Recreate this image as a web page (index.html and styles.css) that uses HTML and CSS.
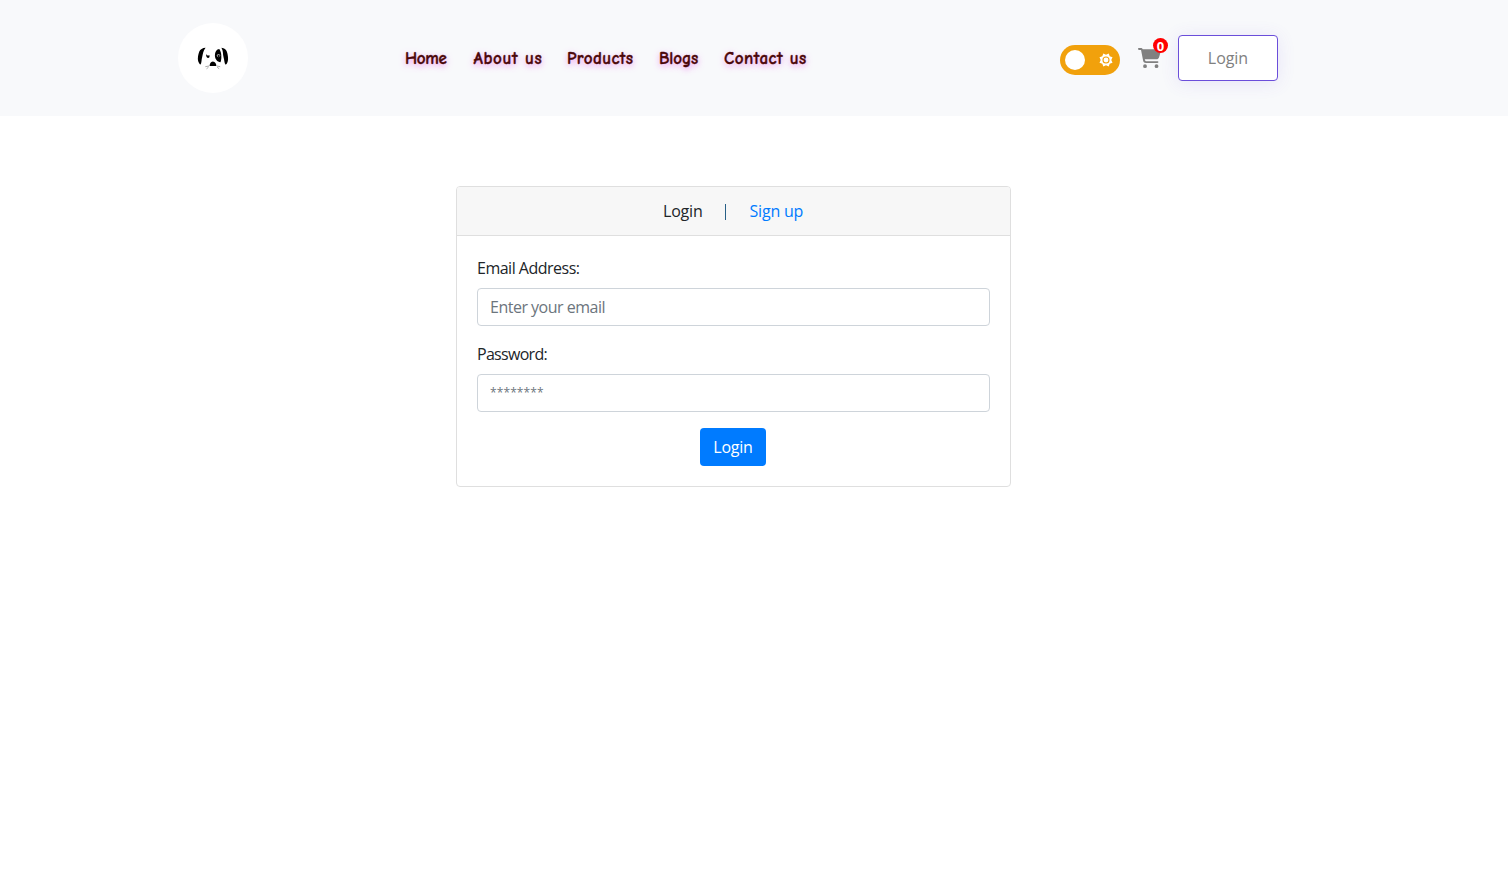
FILE: index.html
```html
<!DOCTYPE html>
<html lang="en">
<head>
<meta charset="utf-8">
<title>Login</title>
<link rel="stylesheet" href="styles.css">
</head>
<body>
<header class="header">
  <a class="logo" href="#" aria-label="Home page">
    <svg width="70" height="70" viewBox="0 0 70 70">
      <path d="M27.6 24.8C24.5 25 22.2 26.4 21.3 28.5C20.3 31 19.3 35.500 20.200 38.300C20.900 40.300 21.900 41.800 22.500 41.600C23.700 40.500 23.300 37 24.300 33.500C24.900 31 25.200 27.600 27.600 24.800Z"/>
      <path d="M43.4 24.800C46.300 25 48.200 26.600 48.900 28.700C49.800 31.500 50.600 36 49.700 38.600C49.100 40.500 48.200 42 47.500 41.600C46.200 40.200 46.600 37.500 45.500 34C44.700 31.200 45.300 27.500 43.400 24.800Z"/>
      <path d="M41.300 26C38.600 26.200 36.900 29 36.900 32.500C37 36 39 39 42.500 39.200C43.800 36 43.800 29.500 41.300 26Z"/>
      <circle class="logo-eye" cx="40.500" cy="32.600" r="1.700"/>
      <circle cx="40.700" cy="33" r=".9"/>
      <path d="M28 31.200L30 32.800L31.300 31.900Q32.200 35 29.800 34.900Q28.100 34.400 28 31.200Z"/>
      <path d="M34.800 38.400C37.200 38.400 38.300 40.600 38.300 42.900H31.600C31.600 40.800 32.600 38.400 34.800 38.400Z"/>
      <path class="logo-line" d="M31 43L27.300 43.700M30.500 44.200L28.500 45.800M38.800 43L42.200 43.700M39.200 44.200L41.200 45.800"/>
    </svg>
  </a>
  <nav class="nav">
    <a class="nav-home" href="#">Home</a>
    <a class="nav-about" href="#">About us</a>
    <a class="nav-products" href="#">Products</a>
    <a class="nav-blogs" href="#">Blogs</a>
    <a class="nav-contact" href="#">Contact us</a>
  </nav>
  <div class="actions">
    <button class="toggle" type="button" aria-label="Theme">
      <span class="knob"></span>
      <svg width="16" height="16" viewBox="-8 -8 16 16">
        <path class="sun" d="M0-5.300L2.700-6.500L3.700-3.700L6.500-2.700L5.300 0L6.500 2.700L3.700 3.700L2.700 6.500L0 5.300L-2.700 6.500L-3.700 3.700L-6.500 2.700L-5.300 0L-6.500-2.700L-3.700-3.700L-2.700-6.500Z"/>
        <circle class="sun-ring" r="3"/>
      </svg>
    </button>
    <a class="cart" href="#" aria-label="Cart">
      <svg width="23" height="20" viewBox="0 0 576 512" preserveAspectRatio="none">
        <path d="M0 24C0 10.700 10.700 0 24 0H69.500c22 0 41.500 12.800 50.600 32h411c26.300 0 45.500 25 38.600 50.400l-41 152.300c-8.500 31.400-37 53.300-69.500 53.300H170.700l5.400 28.500c2.200 11.300 12.100 19.500 23.600 19.500H488c13.300 0 24 10.700 24 24s-10.700 24-24 24H199.700c-34.600 0-64.300-24.600-70.700-58.500L77.400 54.500c-.7-3.800-4-6.500-7.900-6.500H24C10.700 48 0 37.300 0 24zM128 464a48 48 0 1 1 96 0a48 48 0 1 1-96 0zm336-48a48 48 0 1 1 0 96a48 48 0 1 1 0-96z"/>
      </svg>
      <span class="badge">0</span>
    </a>
    <a class="header-login" href="#">Login</a>
  </div>
</header>
<main class="card">
  <div class="tabs">
    <a class="tab active" href="#">Login</a>
    <span class="divider"></span>
    <a class="tab" href="#">Sign up</a>
  </div>
  <form class="form">
    <label class="label label-email" for="email">Email Address:</label>
    <input class="input" id="email" type="email" placeholder="Enter your email">
    <label class="label label-password" for="password">Password:</label>
    <input class="input input-password" id="password" type="password" placeholder="********">
    <button class="submit" type="button">Login</button>
  </form>
</main>
</body>
</html>
```
FILE: styles.css
```css
* { box-sizing: border-box; }
body {
  margin: 0;
  background: #fff;
  color: #212529;
  font: 16px/24px "Open Sans", "Noto Sans", sans-serif;
  letter-spacing: -.25px;
}
a { color: inherit; text-decoration: none; }
.header {
  display: flex;
  align-items: center;
  height: 116px;
  padding-left: 178px;
  background: #f8f9fb;
}
.logo {
  width: 70px;
  height: 70px;
  border-radius: 50%;
  background: #fff;
}
.logo svg { display: block; }
.logo-eye { fill: #999; }
.logo-line { fill: none; stroke: #888; stroke-width: .7; }
.nav {
  display: flex;
  width: 655px;
  padding: 1px 0 0 157px;
  color: #4b0709;
  font: 900 17px/24px "Comic Sans MS", "Comic Neue", Lato, sans-serif;
  text-shadow: 0 2px 6px rgba(236, 99, 233, .75);
  -webkit-text-stroke: .35px #4b0709;
  white-space: nowrap;
}
.nav-home { width: 68.5px; letter-spacing: -.35px; }
.nav-about { width: 93.5px; letter-spacing: .65px; }
.nav-products { width: 92px; letter-spacing: .4px; }
.nav-blogs { width: 65px; letter-spacing: -.1px; }
.nav-contact { letter-spacing: .5px; }
.actions { display: flex; align-items: center; padding-left: 157px; }
.toggle {
  display: flex;
  align-items: center;
  justify-content: space-between;
  width: 60px;
  height: 30px;
  margin-top: 4px;
  padding: 0 6px 0 5px;
  border: 0;
  border-radius: 15px;
  background: #f1a10c;
}
.knob { width: 20px; height: 20px; border-radius: 50%; background: #fff; }
.sun { fill: #fff; }
.sun-ring { fill: none; stroke: #f1a10c; stroke-width: 1.1; }
.cart {
  position: relative;
  width: 23px;
  height: 20px;
  margin-left: 18px;
}
.cart svg { display: block; fill: gray; }
.badge {
  position: absolute;
  top: -10px;
  right: -7px;
  width: 15px;
  height: 15px;
  border-radius: 50%;
  background: red;
  color: #fff;
  font: bold 13px/16px "Open Sans", sans-serif;
  text-align: center;
  letter-spacing: 0;
}
.header-login {
  width: 100px;
  height: 46px;
  margin-left: 17px;
  border: 1px solid #6b4eda;
  border-radius: 4px;
  background: #fff;
  box-shadow: 0 2px 18px rgba(107, 78, 218, .12);
  color: gray;
  line-height: 45px;
  letter-spacing: -.05px;
  text-align: center;
}
.card {
  width: 555px;
  height: 301px;
  margin: 70px 0 0 456px;
  border: 1px solid #dfdfdf;
  border-radius: 4px;
}
.tabs {
  display: flex;
  align-items: center;
  height: 49px;
  padding-left: 206px;
  border-bottom: 1px solid #dfdfdf;
  border-radius: 3px 3px 0 0;
  background: #f7f7f7;
}
.tab { width: 62px; color: #007bff; letter-spacing: -.2px; white-space: nowrap; }
.tab.active { color: #212529; }
.divider { width: 1px; height: 16px; margin: 1px 23.5px 0 0; background: #286087; }
.form { display: flex; flex-direction: column; padding: 20px; }
.label { height: 24px; margin-bottom: 8px; }
.label-email { letter-spacing: -.5px; }
.label-password { letter-spacing: -.7px; }
.input {
  width: 513px;
  height: 38px;
  margin-bottom: 16px;
  padding: 6px 12px;
  border: 1px solid #ced4da;
  border-radius: 4px;
  background: #fff;
  font: inherit;
  letter-spacing: -.5px;
}
.input::placeholder { color: #6c757d; opacity: 1; }
.input-password { padding: 5px 12px 7px; font-size: 12px; letter-spacing: .1px; }
.submit {
  align-self: center;
  width: 66px;
  height: 38px;
  margin-right: 1px;
  padding: 0;
  border: 0;
  border-radius: 4px;
  background: #007bff;
  color: #fff;
  font: inherit;
  letter-spacing: -.25px;
}
```
